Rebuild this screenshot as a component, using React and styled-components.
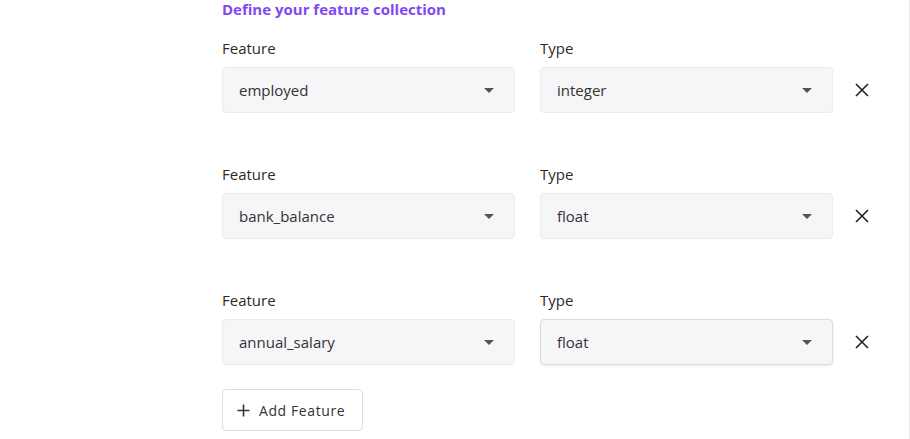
import React from 'react';
import styled, { createGlobalStyle } from 'styled-components';

const Global = createGlobalStyle`
  body {
    margin: 0;
    background: #fff;
    font-family: "Open Sans", "Noto Sans", sans-serif;
    color: #2b2b2b;
  }
`

const Page = styled.div`
  min-height: 439px;
  box-sizing: border-box;
  padding-left: 222px;
  border-right: 1px solid #ececec;
  width: 910px;
`

const Title = styled.h2`
  margin: 0 0 18px;
  font-size: 15px;
  line-height: 18px;
  font-weight: 700;
  color: #8247f5;
`

const Rows = styled.div`
  display: flex;
  flex-direction: column;
  gap: 49px;
`

const Row = styled.div`
  display: flex;
  align-items: flex-end;
`

const Field = styled.div`
  display: flex;
  flex-direction: column;
  gap: 7px;
  width: 293px;
  & + & {
    margin-left: 25px;
  }
`

const Label = styled.label`
  font-size: 15px;
  line-height: 24px;
  color: #2b2b2b;
`

const Select = styled.div`
  height: 46px;
  box-sizing: border-box;
  display: flex;
  align-items: center;
  justify-content: space-between;
  padding: 0 20px 0 16px;
  background: #f6f6f8;
  border: 1px solid ${p => (p.$active ? '#dcdce0' : '#ebebef')};
  box-shadow: ${p => (p.$active ? '0 1px 2px rgba(0,0,0,0.08)' : 'none')};
  border-radius: 4px;
  font-size: 15px;
  color: #333;
`

const Caret = styled.span`
  width: 0;
  height: 0;
  border-left: 5px solid transparent;
  border-right: 5px solid transparent;
  border-top: 5px solid #555;
`

const Remove = styled.button`
  width: 24px;
  height: 46px;
  margin-left: 17px;
  padding: 0;
  border: none;
  background: none;
  display: flex;
  align-items: center;
  justify-content: center;
  cursor: pointer;
  color: #222;
`

const AddButton = styled.button`
  margin-top: 24px;
  width: 141px;
  height: 42px;
  box-sizing: border-box;
  display: flex;
  align-items: center;
  gap: 9px;
  padding: 0 14px;
  background: #fff;
  border: 1px solid #dedee2;
  border-radius: 4px;
  font-family: "Open Sans", sans-serif;
  font-size: 14px;
  letter-spacing: 0.6px;
  color: #333;
  cursor: pointer;
`

const XIcon = () => (
  <svg width="14" height="14" viewBox="0 0 14 14">
    <path d="M1 1L13 13M13 1L1 13" stroke="currentColor" strokeWidth="1.6" fill="none" />
  </svg>
)

const PlusIcon = () => (
  <svg width="13" height="13" viewBox="0 0 13 13">
    <path d="M6.5 0.5V12.5M0.5 6.5H12.5" stroke="#333" strokeWidth="1.6" fill="none" />
  </svg>
)

const features = [
  { name: 'employed', type: 'integer' },
  { name: 'bank_balance', type: 'float' },
  { name: 'annual_salary', type: 'float', active: true },
]

const App = () => {
  return (
    <Page>
      <Global />
      <Title>Define your feature collection</Title>
      <Rows>
        {features.map(f => (
          <Row key={f.name}>
            <Field>
              <Label>Feature</Label>
              <Select>
                {f.name}
                <Caret />
              </Select>
            </Field>
            <Field>
              <Label>Type</Label>
              <Select $active={f.active}>
                {f.type}
                <Caret />
              </Select>
            </Field>
            <Remove aria-label="remove">
              <XIcon />
            </Remove>
          </Row>
        ))}
      </Rows>
      <AddButton>
        <PlusIcon />
        Add Feature
      </AddButton>
    </Page>
  )
}

export default App
